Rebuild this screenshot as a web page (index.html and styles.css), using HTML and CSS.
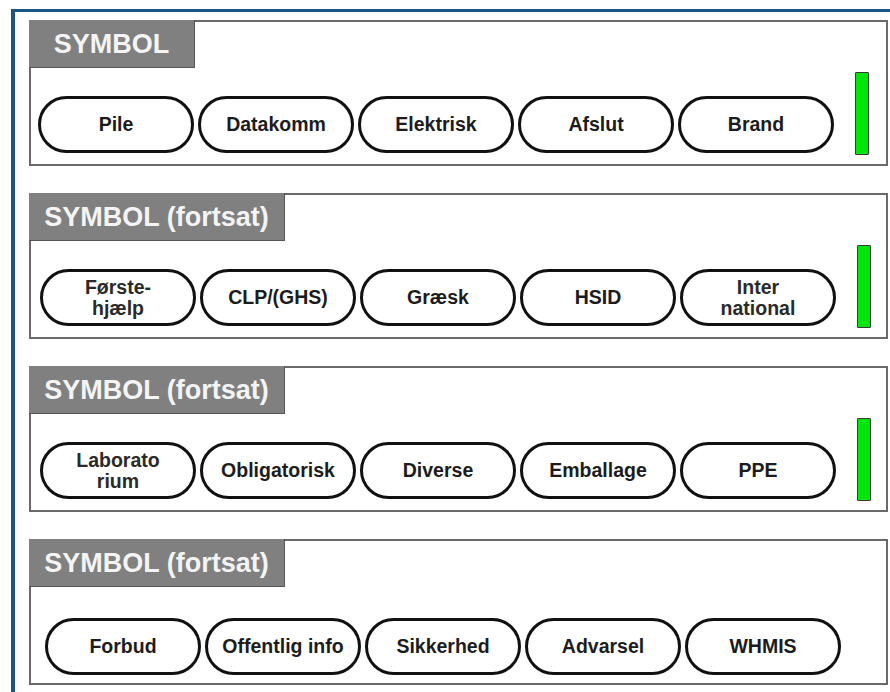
FILE: index.html
```html
<!DOCTYPE html>
<html>
<head>
	<title>Symbol</title>
	<meta charset="utf-8">
	<link rel="stylesheet" href="styles.css">
</head>
<body>
	<div class="frame">
		<div class="panel">
			<div class="tab tab-short">SYMBOL</div>
			<div class="row">
				<div class="pill">Pile</div>
				<div class="pill">Datakomm</div>
				<div class="pill">Elektrisk</div>
				<div class="pill">Afslut</div>
				<div class="pill">Brand</div>
				<div class="bar"></div>
			</div>
		</div>

		<div class="panel">
			<div class="tab">SYMBOL (fortsat)</div>
			<div class="row row-mid">
				<div class="pill two">Første-<br>hjælp</div>
				<div class="pill">CLP/(GHS)</div>
				<div class="pill">Græsk</div>
				<div class="pill">HSID</div>
				<div class="pill two">Inter<br>national</div>
				<div class="bar"></div>
			</div>
		</div>

		<div class="panel">
			<div class="tab">SYMBOL (fortsat)</div>
			<div class="row row-mid">
				<div class="pill two">Laborato<br>rium</div>
				<div class="pill">Obligatorisk</div>
				<div class="pill">Diverse</div>
				<div class="pill">Emballage</div>
				<div class="pill">PPE</div>
				<div class="bar"></div>
			</div>
		</div>

		<div class="panel panel-last">
			<div class="tab">SYMBOL (fortsat)</div>
			<div class="row row-last">
				<div class="pill">Forbud</div>
				<div class="pill">Offentlig info</div>
				<div class="pill">Sikkerhed</div>
				<div class="pill">Advarsel</div>
				<div class="pill">WHMIS</div>
			</div>
		</div>
	</div>
</body>
</html>
```

FILE: styles.css
```css
*, *:before, *:after {
	box-sizing: border-box;
}

body {
	margin: 0;
	background: #fff;
	font-family: "Liberation Sans", Arial, sans-serif;
	overflow: hidden;
}

.frame {
	margin: 9px 0 0 11px;
	width: 900px;
	height: 700px;
	border-top: 3px solid #1b5584;
	border-left: 4px solid #1b5584;
	padding: 8px 0 0 14px;
}

.panel {
	width: 859px;
	height: 146px;
	border: 2px solid #6a6a6a;
	padding: 0 0 9px 7px;
	margin-bottom: 27px;
	display: flex;
	flex-direction: column;
}

.panel-last {
	margin-top: 1px;
}

.tab {
	width: 256px;
	height: 48px;
	margin: -2px 0 0 -9px;
	background: #808080;
	border: 1px solid #555;
	border-width: 0 1px 1px 0;
	color: #f4f4f4;
	font-size: 27px;
	font-weight: bold;
	display: flex;
	align-items: center;
	justify-content: center;
	padding-top: 1px;
}

.tab-short {
	width: 166px;
}

.row {
	margin-top: 4px;
	height: 83px;
	display: flex;
	align-items: flex-end;
	gap: 4px;
}

.row-mid {
	padding-left: 2px;
}

.row-last {
	padding-left: 7px;
}

.row-last .pill {
	margin-bottom: -1px;
}

.pill {
	width: 156px;
	height: 57px;
	margin-bottom: 2px;
	border: 3px solid #111;
	border-radius: 29px;
	display: flex;
	align-items: center;
	justify-content: center;
	text-align: center;
	color: #1c1c1c;
	font-size: 19.5px;
	font-weight: bold;
	line-height: 21px;
}

.pill.two {
	color: #2a2a2a;
}

.bar {
	width: 14px;
	height: 83px;
	margin-left: 17px;
	background: #00e60a;
	border: 1px solid #3a3a3a;
	border-radius: 1px;
}
```
